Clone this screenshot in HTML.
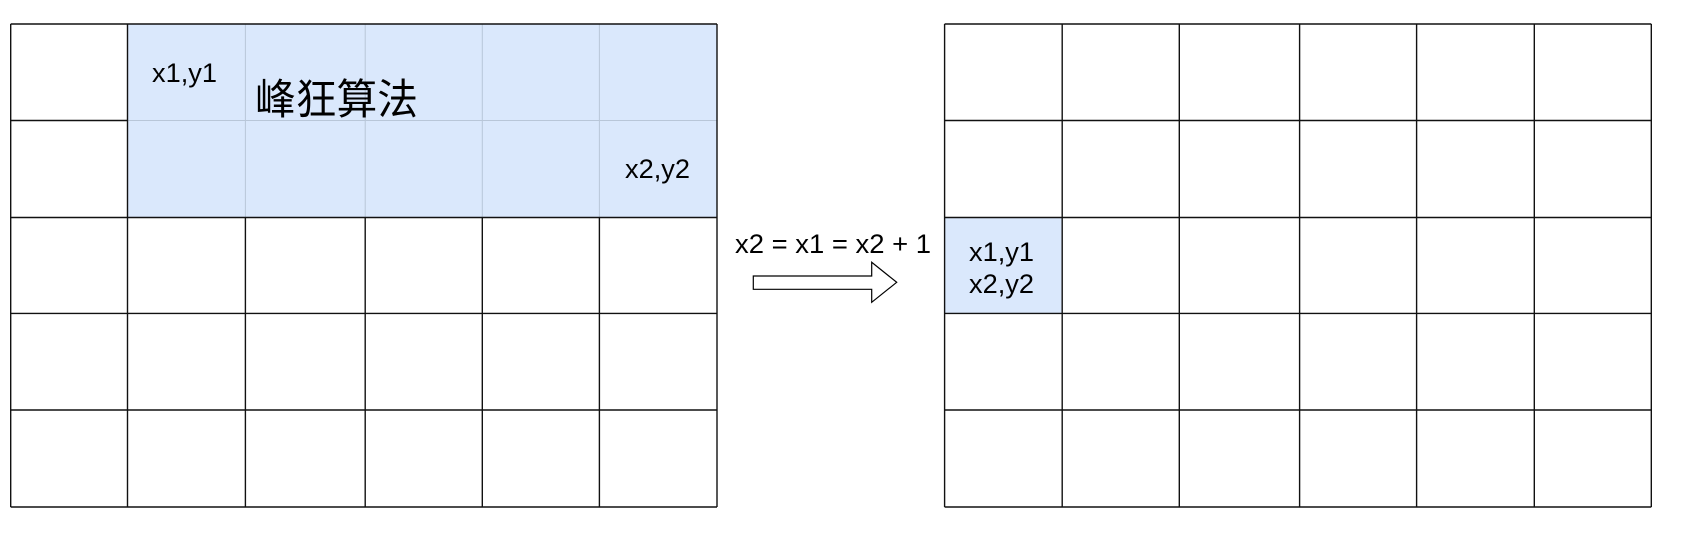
<!DOCTYPE html>
<html><head><meta charset="utf-8"><style>
html,body{margin:0;padding:0;background:#fff;width:1684px;height:559px;overflow:hidden}
svg{display:block}
text{font-family:"Liberation Sans","Noto Sans CJK SC",sans-serif;fill:#000}
</style></head><body>
<svg width="1684" height="559" viewBox="0 0 1684 559" xmlns="http://www.w3.org/2000/svg">
<rect x="127.5" y="24" width="589.5" height="193.5" fill="#dae8fc"/>
<g stroke="#b8c6d8" stroke-width="1">
<line x1="245.4" y1="24" x2="245.4" y2="217.5"/>
<line x1="365.2" y1="24" x2="365.2" y2="217.5"/>
<line x1="482.3" y1="24" x2="482.3" y2="217.5"/>
<line x1="599.4" y1="24" x2="599.4" y2="217.5"/>
<line x1="127.5" y1="120.5" x2="717" y2="120.5"/>
</g>
<g stroke="#111" stroke-width="1.4" fill="none">
<line x1="10.7" y1="24" x2="717" y2="24"/>
<line x1="10.7" y1="120.5" x2="127.5" y2="120.5"/>
<line x1="10.7" y1="217.5" x2="717" y2="217.5"/>
<line x1="10.7" y1="313.4" x2="717" y2="313.4"/>
<line x1="10.7" y1="410" x2="717" y2="410"/>
<line x1="10.7" y1="507" x2="717" y2="507"/>
<line x1="10.7" y1="24" x2="10.7" y2="507"/>
<line x1="127.5" y1="24" x2="127.5" y2="507"/>
<line x1="245.4" y1="217.5" x2="245.4" y2="507"/>
<line x1="365.2" y1="217.5" x2="365.2" y2="507"/>
<line x1="482.3" y1="217.5" x2="482.3" y2="507"/>
<line x1="599.4" y1="217.5" x2="599.4" y2="507"/>
<line x1="717" y1="24" x2="717" y2="507"/>
</g>
<text x="152" y="82" font-size="27" textLength="65" lengthAdjust="spacingAndGlyphs">x1,y1</text>
<text x="255" y="114" font-size="42" textLength="163" lengthAdjust="spacingAndGlyphs">峰狂算法</text>
<text x="625" y="178" font-size="27" textLength="65" lengthAdjust="spacingAndGlyphs">x2,y2</text>
<text x="735" y="253" font-size="27" textLength="196" lengthAdjust="spacingAndGlyphs">x2 = x1 = x2 + 1</text>
<path d="M753.3 276 L871.7 276 L871.7 262.3 L896.7 282.3 L871.7 302.3 L871.7 289.3 L753.3 289.3 Z" fill="#fff" stroke="#000" stroke-width="1.2"/>
<rect x="944.6" y="217.5" width="117.6" height="95.9" fill="#dae8fc"/>
<g stroke="#111" stroke-width="1.4" fill="none">
<line x1="944.6" y1="24" x2="1651.3" y2="24"/>
<line x1="944.6" y1="120.5" x2="1651.3" y2="120.5"/>
<line x1="944.6" y1="217.5" x2="1651.3" y2="217.5"/>
<line x1="944.6" y1="313.4" x2="1651.3" y2="313.4"/>
<line x1="944.6" y1="410" x2="1651.3" y2="410"/>
<line x1="944.6" y1="507" x2="1651.3" y2="507"/>
<line x1="944.6" y1="24" x2="944.6" y2="507"/>
<line x1="1062.2" y1="24" x2="1062.2" y2="507"/>
<line x1="1179.3" y1="24" x2="1179.3" y2="507"/>
<line x1="1299.6" y1="24" x2="1299.6" y2="507"/>
<line x1="1416.6" y1="24" x2="1416.6" y2="507"/>
<line x1="1534.3" y1="24" x2="1534.3" y2="507"/>
<line x1="1651.3" y1="24" x2="1651.3" y2="507"/>
</g>
<text x="969" y="261" font-size="27" textLength="65" lengthAdjust="spacingAndGlyphs">x1,y1</text>
<text x="969" y="293" font-size="27" textLength="65" lengthAdjust="spacingAndGlyphs">x2,y2</text>
</svg>
</body></html>
